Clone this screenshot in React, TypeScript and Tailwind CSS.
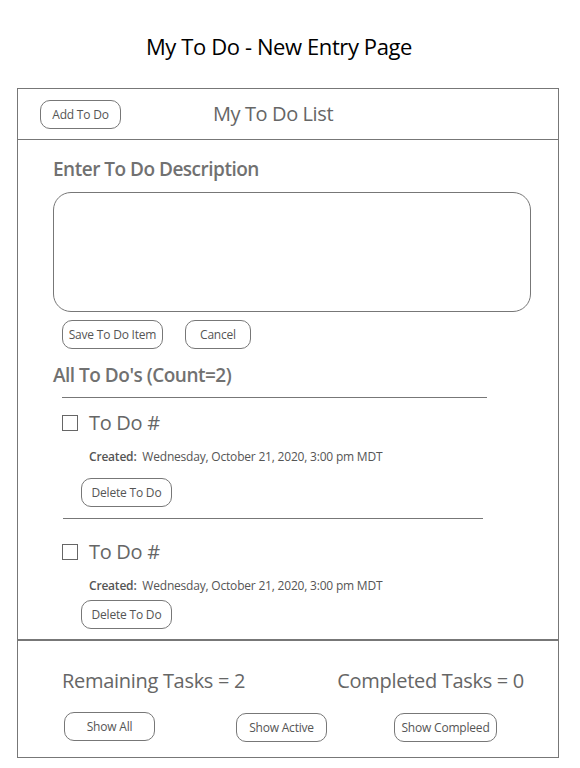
const todos = [
  { id: 1, title: "To Do #", created: "Wednesday, October 21, 2020, 3:00 pm MDT" },
  { id: 2, title: "To Do #", created: "Wednesday, October 21, 2020, 3:00 pm MDT" },
];

function PillButton({ label, className = "" }: { label: string; className?: string }) {
  return (
    <button
      className={`h-[29px] rounded-[10px] border border-[#777] bg-white text-[12px] text-[#555] leading-none tracking-[-0.2px] ${className}`}
    >
      {label}
    </button>
  );
}

export default function App() {
  return (
    <div className="w-[580px] h-[768px] bg-white font-['Open_Sans',sans-serif] text-[#666]">
      <h1 className="pt-[31px] h-[88px] pr-[22px] text-center text-[22px] leading-[30px] text-black tracking-[-0.4px]">
        My To Do - New Entry Page
      </h1>

      <div className="ml-[17px] w-[542px] h-[670px] border border-[#777] flex flex-col">
        {/* header */}
        <div className="h-[51px] border-b border-[#777] flex items-center pl-[22px]">
          <PillButton label="Add To Do" className="w-[81px] h-[26px] rounded-[9px] mt-[1px]" />
          <span className="ml-[92px] text-[20px] tracking-[-0.4px] text-[#666]">My To Do List</span>
        </div>

        {/* body */}
        <div className="flex-1 pl-[35px] pt-[16px]">
          <p className="text-[19px] font-semibold leading-[26px] tracking-[-0.5px] text-[#717171]">
            Enter To Do Description
          </p>
          <div className="mt-[10px] w-[478px] h-[120px] rounded-[18px] border border-[#777]" />
          <div className="mt-[8px] flex gap-[22px] pl-[9px]">
            <PillButton label="Save To Do Item" className="w-[101px]" />
            <PillButton label="Cancel" className="w-[66px]" />
          </div>
          <p className="mt-[13px] text-[19px] font-semibold leading-[26px] tracking-[-0.5px] text-[#717171]">
            All To Do's (Count=2)
          </p>

          {todos.map((todo, i) => (
            <div key={todo.id} className="pl-[9px]">
              <div
                className={`h-px bg-[#777] ${i === 0 ? "mt-[9px] w-[425px]" : "mt-[11px] w-[420px] ml-[1px]"}`}
              />
              <div className={`flex items-center gap-[11px] ${i === 0 ? "mt-[12px]" : "mt-[20px]"}`}>
                <span className="w-[16px] h-[16px] border border-[#666]" />
                <span className="text-[20px] leading-[26px] tracking-[-0.3px]">{todo.title}</span>
              </div>
              <p className="mt-[13px] pl-[27px] text-[12px] leading-[16px] tracking-[-0.2px] text-[#555]">
                <span className="font-semibold">Created:</span>&nbsp; {todo.created}
              </p>
              <PillButton
                label="Delete To Do"
                className={`ml-[19px] w-[91px] ${i === 0 ? "mt-[13px]" : "mt-[6px]"}`}
              />
            </div>
          ))}
        </div>

        {/* footer */}
        <div className="h-[118px] border-t-2 border-[#777] pt-[26px]">
          <div className="flex text-[20px] leading-[28px] tracking-[-0.3px]">
            <span className="ml-[44px]">Remaining Tasks = 2</span>
            <span className="ml-auto mr-[34px]">Completed Tasks = 0</span>
          </div>
          <div className="mt-[17px] flex items-start">
            <PillButton label="Show All" className="ml-[46px] w-[91px]" />
            <PillButton label="Show Active" className="ml-[81px] w-[91px] mt-[1px]" />
            <PillButton label="Show Compleed" className="ml-[67px] w-[103px] mt-[1px]" />
          </div>
        </div>
      </div>
    </div>
  );
}
